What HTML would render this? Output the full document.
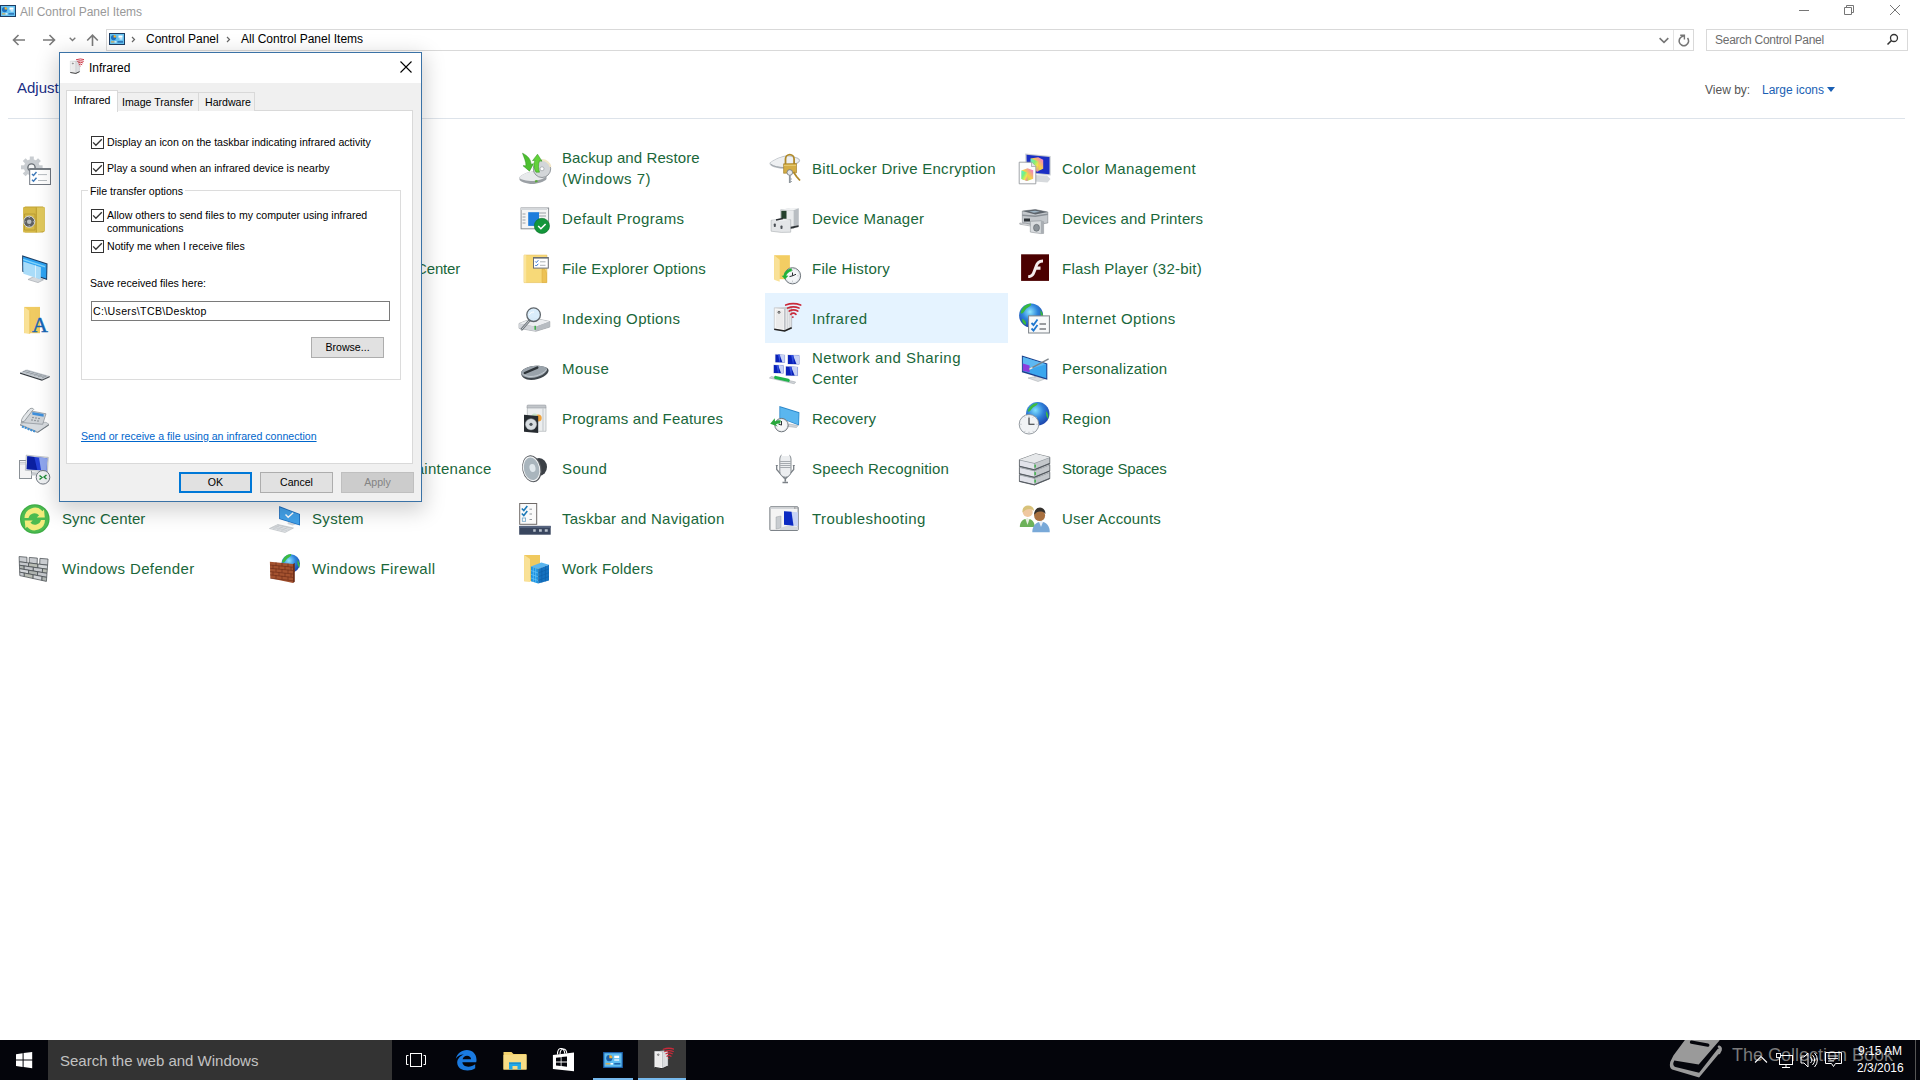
<!DOCTYPE html>
<html><head><meta charset="utf-8">
<style>
*{margin:0;padding:0;box-sizing:border-box}
html,body{width:1920px;height:1080px;overflow:hidden;background:#fff;font-family:"Liberation Sans",sans-serif;position:relative}
.a{position:absolute}
.t{position:absolute;white-space:nowrap;line-height:1}
.it{position:absolute;white-space:nowrap;line-height:20.4px;font-size:15px;color:#1a673a}
.ic{position:absolute;width:32px;height:32px;overflow:visible}
.dt{position:absolute;white-space:nowrap;line-height:1;font-size:10.6px;color:#000}
.cb{position:absolute;width:13px;height:13px;border:1px solid #333;background:#fff}
.cb svg{position:absolute;left:0;top:0}
.btn{position:absolute;height:21px;background:#e1e1e1;border:1px solid #adadad;font-size:10.6px;text-align:center;line-height:19px;color:#000}
</style></head><body>

<!-- title bar -->
<svg class="a" style="left:0px;top:5px" width="16" height="12" viewBox="0 0 16 12"><rect x="0.5" y="0.5" width="15" height="11" fill="#66c3f2" stroke="#1e3d63"/><circle cx="4.6" cy="4.6" r="2.6" fill="#1d6fc0"/><path d="M4.6 2a2.6 2.6 0 0 1 2.6 2.6H4.6z" fill="#f7b52c"/><rect x="9.5" y="2.5" width="4" height="2.2" fill="#fff"/><rect x="10.5" y="5.3" width="3" height="1.2" fill="#e8f6ff"/><rect x="2" y="8.3" width="3.5" height="1.2" fill="#d9b35c"/><rect x="5.5" y="8.3" width="2" height="1.2" fill="#fff"/><rect x="8.5" y="8.3" width="5.5" height="1.2" fill="#1d5fa8"/></svg>
<div class="t" style="left:20px;top:5.8px;font-size:12px;color:#999">All Control Panel Items</div>

<!-- window controls -->
<div class="a" style="left:1799px;top:10px;width:10px;height:1px;background:#767676"></div>
<svg class="a" style="left:1843px;top:4px" width="14" height="14"><path d="M1.5 3.5H8.5V10.5H1.5Z M3.5 3.5V1.5H10.5V8.5H8.5" fill="none" stroke="#767676" stroke-width="1"/></svg>
<svg class="a" style="left:1889px;top:4px" width="12" height="12"><path d="M1 1L11 11M11 1L1 11" stroke="#767676" stroke-width="1"/></svg>

<!-- nav arrows -->
<svg class="a" style="left:12px;top:34px" width="14" height="12"><path d="M1.5 6h11.5M6.5 1L1.5 6l5 5" fill="none" stroke="#7a7a7a" stroke-width="1.6"/></svg>
<svg class="a" style="left:42px;top:34px" width="14" height="12"><path d="M1 6h11.5M7.5 1l5 5-5 5" fill="none" stroke="#7a7a7a" stroke-width="1.6"/></svg>
<svg class="a" style="left:69px;top:37px" width="7" height="5"><path d="M0.7 0.7l2.8 2.8 2.8-2.8" fill="none" stroke="#7a7a7a" stroke-width="1.3"/></svg>
<svg class="a" style="left:86px;top:34px" width="13" height="12"><path d="M6.5 12V1.5M1.2 6.5l5.3-5.3 5.3 5.3" fill="none" stroke="#7a7a7a" stroke-width="1.6"/></svg>

<!-- address bar -->
<div class="a" style="left:106px;top:29px;width:1588px;height:22px;border:1px solid #d9d9d9"></div>
<div class="a" style="left:1673px;top:30px;width:1px;height:20px;background:#e3e3e3"></div>
<svg class="a" style="left:109px;top:33px" width="16" height="12" viewBox="0 0 16 12"><rect x="0.5" y="0.5" width="15" height="11" fill="#66c3f2" stroke="#1e3d63"/><circle cx="4.6" cy="4.6" r="2.6" fill="#1d6fc0"/><path d="M4.6 2a2.6 2.6 0 0 1 2.6 2.6H4.6z" fill="#f7b52c"/><rect x="9.5" y="2.5" width="4" height="2.2" fill="#fff"/><rect x="10.5" y="5.3" width="3" height="1.2" fill="#e8f6ff"/><rect x="2" y="8.3" width="3.5" height="1.2" fill="#d9b35c"/><rect x="5.5" y="8.3" width="2" height="1.2" fill="#fff"/><rect x="8.5" y="8.3" width="5.5" height="1.2" fill="#1d5fa8"/></svg>
<svg class="a" style="left:131px;top:36px" width="5" height="7"><path d="M1 1l2.5 2.5L1 6" fill="none" stroke="#666" stroke-width="1.2"/></svg>
<div class="t" style="left:146px;top:32.7px;font-size:12px;color:#000">Control Panel</div>
<svg class="a" style="left:226px;top:36px" width="5" height="7"><path d="M1 1l2.5 2.5L1 6" fill="none" stroke="#666" stroke-width="1.2"/></svg>
<div class="t" style="left:241px;top:32.7px;font-size:12px;color:#000">All Control Panel Items</div>
<svg class="a" style="left:1658px;top:35px" width="12" height="10"><path d="M1.6 3.2L6 7.4l4.3-4.3" fill="none" stroke="#767676" stroke-width="1.6"/></svg>
<svg class="a" style="left:1677px;top:33px" width="14" height="14"><path d="M6.85 3.3A4.7 4.7 0 1 0 10.5 5.04" fill="none" stroke="#767676" stroke-width="1.5"/><path d="M3.2 2.3H7.4V6.5" fill="none" stroke="#767676" stroke-width="1.4"/></svg>

<!-- search -->
<div class="a" style="left:1706px;top:29px;width:202px;height:22px;border:1px solid #d9d9d9"></div>
<div class="t" style="left:1715px;top:34.3px;font-size:12px;color:#6d6d6d;letter-spacing:-0.26px">Search Control Panel</div>
<svg class="a" style="left:1886px;top:33px" width="13" height="13"><circle cx="8" cy="5" r="3.5" fill="none" stroke="#333" stroke-width="1.3"/><path d="M5.5 7.5L1.5 11.5" stroke="#333" stroke-width="1.6"/></svg>

<!-- header -->
<div class="t" style="left:17px;top:80.3px;font-size:15px;color:#1a2e85">Adjust your computer's settings</div>
<div class="t" style="left:1705px;top:84.3px;font-size:12px;color:#555">View by:</div>
<div class="t" style="left:1762px;top:84.3px;font-size:12px;color:#1a5fb4">Large icons</div>
<svg class="a" style="left:1827px;top:87px" width="9" height="6"><path d="M0 0h8l-4 5z" fill="#1a5fb4"/></svg>
<div class="a" style="left:8px;top:118px;width:1897px;height:1px;background:#dde3ea"></div>

<!-- highlight -->
<div class="a" style="left:765px;top:293px;width:243px;height:50px;background:#e5f3ff"></div>

<div class="it" style="left:62px;top:158.60px;letter-spacing:0.000px">Administrative Tools</div>
<svg class="ic" style="left:18px;top:152px" viewBox="0 0 32 32">
<g transform="translate(13.8 15.3)" fill="#c9cdd1">
<circle r="8"/>
<g id="t"><rect x="-2" y="-10.8" width="4" height="4"/></g>
<rect x="-2" y="-10.8" width="4" height="4" transform="rotate(45)"/>
<rect x="-2" y="-10.8" width="4" height="4" transform="rotate(90)"/>
<rect x="-2" y="-10.8" width="4" height="4" transform="rotate(135)"/>
<rect x="-2" y="-10.8" width="4" height="4" transform="rotate(180)"/>
<rect x="-2" y="-10.8" width="4" height="4" transform="rotate(225)"/>
<rect x="-2" y="-10.8" width="4" height="4" transform="rotate(270)"/>
<rect x="-2" y="-10.8" width="4" height="4" transform="rotate(315)"/>
</g>
<circle cx="13.5" cy="15.5" r="3.6" fill="#f4f5f6" stroke="#6a7076" stroke-width="1.4"/>
<rect x="11.7" y="16.7" width="20.8" height="15.8" fill="#fff" stroke="#707780" stroke-width="1"/>
<rect x="11.5" y="16.3" width="21.2" height="1.6" fill="#6e757c"/>
<path d="M14 22l1.5 1.5 3-3.5M14 27.8l1.5 1.5 3-3.5" stroke="#3d78b8" stroke-width="1.4" fill="none"/>
<path d="M20 22.6h9M20 28.5h9" stroke="#9aa0a6" stroke-width="0.7"/>
</svg>
<div class="it" style="left:312px;top:158.60px;letter-spacing:0.000px">AutoPlay</div>
<div class="it" style="left:562px;top:148.40px;letter-spacing:0.100px">Backup and Restore</div>
<div class="it" style="left:562px;top:168.80px;letter-spacing:0.520px">(Windows 7)</div>
<svg class="ic" style="left:518px;top:152px" viewBox="0 0 32 32">
<path d="M1.5 25.5c0-2 9-6 13.5-6s13 2 13.5 4.5v3c-1 2.5-10 5-14 5-6 0-13-2.5-13-4.5z" fill="#9ba0a5"/>
<path d="M1.5 25.5c0-2 9-6 13.5-6s13 2 13.5 4.5c-1 2.5-10 5-13.5 5-6 0-13.5-1.5-13.5-3.5z" fill="#e8eaec"/>
<path d="M17 29.5l2.5-0.5" stroke="#5aa83c" stroke-width="1.8"/>
<circle cx="24" cy="16.8" r="8.7" fill="#d3d6d9" stroke="#6f757b" stroke-width="0.7"/>
<path d="M24 8.1a8.7 8.7 0 0 1 8.5 7" stroke="#f2e7c8" stroke-width="2" fill="none"/>
<circle cx="24" cy="16.8" r="2" fill="#fff" stroke="#8e9398" stroke-width="0.6"/>
<path d="M4.5 1.2c5 2.5 8.5 6 8.5 11l2.5-0.5-4 7.5-6.5-5.5 3 0c0-4.5-2-8-3.5-12.5z" fill="#4cc02f" stroke="#2d8c1c" stroke-width="0.5"/>
<path d="M18 20.2c-2.5-4-2.5-9-1-12l-2.5 0.5 5-6.5 4.5 7-2.5-0.3c-1.5 3.5-1 8 0 11.3z" fill="#62d23a" stroke="#2d8c1c" stroke-width="0.5"/>
</svg>
<div class="it" style="left:812px;top:158.60px;letter-spacing:0.272px">BitLocker Drive Encryption</div>
<svg class="ic" style="left:768px;top:152px" viewBox="0 0 32 32">
<path d="M1.5 11.5c0-2 12-8 17-8 6 0 13.7 2 13.7 5 0 3-11 8.3-16.7 8.3-6.5 0-14-2.5-14-5.3z" fill="#bfc4c9"/>
<path d="M2.5 11.2c1-2 11-6.7 16-6.7 5 0 12 1.7 12.5 4-1 2.5-11 6.5-15.5 6.5-5.5 0-12-1.5-13-3.8z" fill="#eef0f2"/>
<path d="M3 12.5c3 2 8 3 12.5 3" stroke="#9ea4aa" stroke-width="1" fill="none"/>
<path d="M17.5 12V7a4.3 4.3 0 0 1 8.6 0v5" fill="none" stroke="#b08a2a" stroke-width="1.8"/>
<path d="M15.6 11.8l12.9-0.3v9.3l-12.9 0.5z" fill="#d4ad45" stroke="#9a7520" stroke-width="0.6"/>
<path d="M16 13.5h12" stroke="#e8cf7a" stroke-width="0.8"/>
<circle cx="21.8" cy="20.5" r="2.8" fill="#e4e7ea" stroke="#6d747a" stroke-width="0.8"/>
<path d="M21.8 23v8" stroke="#8f969c" stroke-width="1.8"/>
<path d="M22.5 27h1.3M22.5 29.5h1.3" stroke="#8f969c" stroke-width="1"/>
<path d="M25.5 20l3 4.5 3.5 4" stroke="#b08a2a" stroke-width="1.8" fill="none"/>
</svg>
<div class="it" style="left:1062px;top:158.60px;letter-spacing:0.400px">Color Management</div>
<svg class="ic" style="left:1018px;top:152px" viewBox="0 0 32 32">
<defs><linearGradient id="cg1" x1="0" y1="0" x2="1" y2="1"><stop offset="0" stop-color="#4ff0e0"/><stop offset="0.4" stop-color="#7cf07a"/><stop offset="0.7" stop-color="#f6e44a"/><stop offset="1" stop-color="#f25ac8"/></linearGradient>
<linearGradient id="cg2" x1="1" y1="0" x2="0" y2="1"><stop offset="0" stop-color="#f06de0"/><stop offset="0.5" stop-color="#f6d345"/><stop offset="1" stop-color="#62e08a"/></linearGradient></defs>
<path d="M15 23l14 0.5 3.5 3.5-3 3.5-13-1z" fill="#d7dadd"/>
<path d="M7.2 1.4l25.5 2.5v19.6l-25-2.5z" fill="#c9cdd1"/>
<path d="M8.5 2.8l23 2.2v17.2l-22.5-2z" fill="#1b2fc4"/>
<path d="M12.7 6.5l7.5-1.3 5 2.5v9l-5 2.3-7.5-3z" fill="url(#cg2)"/>
<path d="M12.7 6.5l7.5 3v10.5l-7.5-3z" fill="url(#cg1)" opacity="0.9"/>
<path d="M1.2 10.2h12.3l4.3 4.3v17.3H1.2z" fill="#fdfdfd" stroke="#8b9196" stroke-width="0.8"/>
<path d="M13.5 10.2v4.3h4.3" fill="#e4e6e8" stroke="#8b9196" stroke-width="0.6"/>
<path d="M3.5 18.5l6-2.2 5.7 2v8.5l-6 2.2-5.7-2z" fill="url(#cg2)"/>
<path d="M3.5 18.5l5.7 2v8.5l-5.7-2z" fill="url(#cg1)"/>
</svg>
<div class="it" style="left:62px;top:208.60px;letter-spacing:0.000px">Credential Manager</div>
<svg class="ic" style="left:18px;top:202px" viewBox="0 0 32 32">
<path d="M5.3 5.5l2-1h17.5l1.9 1.2v23.5l-1.9 1.2H7.3l-2-1z" fill="#c2a332"/>
<path d="M5.3 5.5h13v24.9h-13z" fill="#d6b946"/>
<path d="M18.3 5.5l8.4-0.3v23.9l-8.4 1.3z" fill="#e0c85c"/>
<path d="M18.3 5.5v24.9" stroke="#b59628" stroke-width="0.8"/>
<path d="M6.5 12h10.5v16h-10.5z" fill="none" stroke="#b39530" stroke-width="0.8"/>
<circle cx="11.2" cy="19.7" r="5.6" fill="#5d6062" stroke="#d8dadc" stroke-width="1"/>
<circle cx="11.2" cy="19.7" r="2.3" fill="#b9bdc0"/>
<g fill="#e8e8e8"><circle cx="11.2" cy="15.6" r="0.5"/><circle cx="11.2" cy="23.8" r="0.5"/><circle cx="7.1" cy="19.7" r="0.5"/><circle cx="15.3" cy="19.7" r="0.5"/></g>
</svg>
<div class="it" style="left:312px;top:208.60px;letter-spacing:0.000px">Date and Time</div>
<div class="it" style="left:562px;top:208.60px;letter-spacing:0.360px">Default Programs</div>
<svg class="ic" style="left:518px;top:202px" viewBox="0 0 32 32">
<rect x="3.1" y="6" width="27.5" height="20.8" fill="#f4f4f4" stroke="#8b9095"/>
<rect x="3" y="6" width="26" height="2" fill="#d5d8db"/>
<rect x="10.2" y="10.2" width="10.8" height="13.7" fill="#1f7ddb"/>
<path d="M4.5 12h3M4.5 15h3M4.5 18h3M4.5 21h3M21 11h7M21 14h7" stroke="#9aa0a6"/>
<circle cx="23.9" cy="23.9" r="7.6" fill="#13963a" stroke="#0b6e29" stroke-width="0.6"/>
<path d="M20.2 24l2.7 2.7 4.7-4.7" stroke="#fff" stroke-width="1.6" fill="none"/>
</svg>
<div class="it" style="left:812px;top:208.60px;letter-spacing:0.208px">Device Manager</div>
<svg class="ic" style="left:768px;top:202px" viewBox="0 0 32 32">
<path d="M12.7 7.7l10-1.7 7.9 0.2v17.3l-7.9 2-10-1z" fill="#c9cdd1"/>
<path d="M12.7 7.7l13.3 0.3v18.5l-13.3-1.5z" fill="#e9ebed" stroke="#a7acb1" stroke-width="0.5"/>
<path d="M26 8l4.6-1.8v17.3l-4.6 2z" fill="#b9bec3"/>
<path d="M12.7 7.7l10-1.7 7.9 0.2-4.6 1.8z" fill="#f4f5f6"/>
<rect x="13.3" y="8.8" width="5.2" height="8" fill="#24402c"/>
<path d="M3.1 18.3l9.6-1.3 10 0.7v12.5l-9.5 0.2-10.1-1.2z" fill="#e4e6e8" stroke="#9da2a7" stroke-width="0.5"/>
<path d="M3.1 18.3l9.6-1.3 10 0.7-9.6 1z" fill="#f6f7f8"/>
<path d="M8 18l7-1.5" stroke="#2b2f33" stroke-width="1.3"/>
<rect x="5.8" y="21.5" width="2" height="3.5" rx="0.8" fill="#4a4f54"/>
<rect x="12.5" y="23.5" width="2" height="3.5" rx="0.8" fill="#4a4f54"/>
<path d="M22.7 24.8l7.9-1.5v1.8l-7.9 1.6z" fill="#2d3236"/>
</svg>
<div class="it" style="left:1062px;top:208.60px;letter-spacing:0.137px">Devices and Printers</div>
<svg class="ic" style="left:1018px;top:202px" viewBox="0 0 32 32">
<path d="M4.3 9l13-1.5 12.5 2.5v11l-12.8 2-12.7-2.5z" fill="#c4c8cc" stroke="#6e757b" stroke-width="0.5"/>
<path d="M4.3 9l13-1.5 12.5 2.5-12.5 2.5z" fill="#5e656c"/>
<path d="M11 9.5l6-0.8 5 1-6 1z" fill="#9fb6c6"/>
<path d="M4.3 12.5l13 1 12.5-2v1.5l-12.5 2-13-1z" fill="#8a9096"/>
<path d="M1.8 21l10.9 1.5v1.5l-10.9-1.8z" fill="#fafafa" stroke="#6e757b" stroke-width="0.5"/>
<path d="M6 16.5h6v3H6z" fill="#2f3438"/>
<path d="M12.3 19.3l10.5-0.5 2.8 1v11.6l-2.8 0.2-10.5-1.5z" fill="#d9dcdf" stroke="#7b8187" stroke-width="0.5"/>
<path d="M22.8 18.8l2.8 1v11.6l-2.8 0.2z" fill="#a9aeb3"/>
<ellipse cx="18.5" cy="25.8" rx="3" ry="3.5" fill="#8b9298" stroke="#4f555a" stroke-width="0.5"/>
</svg>
<div class="it" style="left:62px;top:258.60px;letter-spacing:0.000px">Display</div>
<svg class="ic" style="left:18px;top:252px" viewBox="0 0 32 32">
<path d="M10 27.5l6-3 9.5 3.3-5.5 2.8z" fill="#d5d9dd" stroke="#9aa0a6" stroke-width="0.6"/>
<path d="M4.1 3.2l25.4 8.4-0.4 16.3-24.8-8.2z" fill="#1d3f66"/>
<path d="M5.1 4.7l23.4 7.6-0.3 14.3-22.9-7.5z" fill="#2ea3f2"/>
<path d="M5.1 6.8l22 7.2v1.5l-22-7.2z" fill="#7fd3fb"/>
<path d="M5.3 9.5l17.6 5.8-0.1 12.2-17.4-5.7z" fill="#a9dcf9"/>
<path d="M17.5 13.5v12.3" stroke="#e6f6ff" stroke-width="0.8"/>
</svg>
<div class="it" style="left:312px;top:258.60px;letter-spacing:-0.175px">Ease of Access Center</div>
<div class="it" style="left:562px;top:258.60px;letter-spacing:0.185px">File Explorer Options</div>
<svg class="ic" style="left:518px;top:252px" viewBox="0 0 32 32">
<path d="M6 3.1h22.9v27.5H6z" fill="#f7d978" stroke="#e4bd55" stroke-width="0.6"/>
<path d="M6 3.1h2.2v27.5H6z" fill="#fbe59c"/>
<path d="M24 17l2.5 0 2 4v9.5h-4.5z" fill="#edc255" stroke="#d9a93c" stroke-width="0.5"/>
<rect x="15.5" y="5.5" width="14.8" height="10.6" fill="#fff" stroke="#6b6f75" stroke-width="1"/>
<rect x="15.5" y="5.3" width="14.8" height="1.3" fill="#6b6f75"/>
<path d="M17.3 9.5l1 1 2-2.2M17.3 13l1 1 2-2.2" stroke="#2a6fcf" stroke-width="1" fill="none"/>
<path d="M22 9.8h5.5M22 13.3h5.5" stroke="#8a9096" stroke-width="0.7"/>
</svg>
<div class="it" style="left:812px;top:258.60px;letter-spacing:0.255px">File History</div>
<svg class="ic" style="left:768px;top:252px" viewBox="0 0 32 32">
<path d="M6.2 3.2h15.7v24h-15.7z" fill="#f3cd63"/>
<path d="M6.2 3.2l5.5 4.5v22l-5.5-2z" fill="#f9e197"/>
<circle cx="24.5" cy="23.8" r="8.1" fill="#e4e8ec" stroke="#6f767c" stroke-width="1"/>
<circle cx="24.5" cy="23.8" r="6.3" fill="#f4f6f8"/>
<g stroke="#9aa0a6" stroke-width="0.6"><path d="M24.5 17.8v1.2M24.5 28.6v1.2M18.5 23.8h1.2M29.3 23.8h1.2"/></g>
<path d="M24.5 20.5v3.3l-3 0.8M24.5 23.8l3.5-1.5" stroke="#2a2f33" stroke-width="1" fill="none"/>
<path d="M15.4 23.8c1-4 4-7 8.4-7.4v2.8c-3 0.4-5 2.5-5.6 4.6l2.2 0-3.4 3.4-3.4-3.4z" fill="#22b33a"/>
</svg>
<div class="it" style="left:1062px;top:258.60px;letter-spacing:0.235px">Flash Player (32-bit)</div>
<svg class="ic" style="left:1018px;top:252px" viewBox="0 0 32 32">
<rect x="3.1" y="2.3" width="27.9" height="26.6" fill="#4b0000"/>
<path d="M25 7.5c-5 0-7.2 3.3-8.2 6.3l-2 5.3c-1 3-2.2 4.2-4.6 4.2v2.8c4.2 0 6.3-2.8 7.3-5.8l1-2.6h4v-3.2h-3c1-2.5 2.5-3.9 5.5-3.9z" fill="#f4eaea"/>
</svg>
<div class="it" style="left:62px;top:308.60px;letter-spacing:0.000px">Fonts</div>
<svg class="ic" style="left:18px;top:302px" viewBox="0 0 32 32">
<path d="M6.2 4.9h15.8v26.3H6.2z" fill="#f0cb62"/>
<path d="M6.2 4.9l5.5 4v23l-5.5-1.2z" fill="#f9e196"/>
<path d="M11.7 8.9v23" stroke="#e6bd55" stroke-width="0.6"/>
<text x="22" y="29.8" font-family="Liberation Serif" font-size="22" text-anchor="middle" fill="#1565b5" stroke="#1565b5" stroke-width="0.5">A</text>
</svg>
<div class="it" style="left:312px;top:308.60px;letter-spacing:0.000px">HomeGroup</div>
<div class="it" style="left:562px;top:308.60px;letter-spacing:0.360px">Indexing Options</div>
<svg class="ic" style="left:518px;top:302px" viewBox="0 0 32 32">
<path d="M1 21.5l14-5.5 16.8 3.5v5.5l-14 4.3-16.8-3z" fill="#a4a9ae" stroke="#7a8085" stroke-width="0.5"/>
<path d="M1 21.5l14-5.5 16.8 3.5-14 5.3z" fill="#eceef0"/>
<path d="M1 21.5l16.8 3.3v4.5l-16.8-3z" fill="#d2d5da"/>
<path d="M17.8 24.8l14-5.3v5.5l-14 4.3z" fill="#b7bcc1"/>
<rect x="16.4" y="23.8" width="1.6" height="4" fill="#3fb04a"/>
<path d="M11.5 18.5L3.9 27.2" stroke="#6f767c" stroke-width="2.6" stroke-linecap="round"/>
<path d="M11.5 18.5L3.9 27.2" stroke="#d9dde1" stroke-width="0.8" stroke-linecap="round"/>
<circle cx="15.6" cy="12.7" r="6.8" fill="#d6ebfb" fill-opacity="0.9" stroke="#5f666c" stroke-width="1.3"/>
<path d="M11 13c1-2 3-3 5-3" stroke="#fff" stroke-width="1" fill="none"/>
</svg>
<div class="it" style="left:812px;top:308.60px;letter-spacing:0.486px">Infrared</div>
<svg class="ic" style="left:768px;top:302px" viewBox="0 0 32 32">
<path d="M6.3 5.8l12.4-0.8 5 1.2v19.5l-7 3.3-10.4-1.8z" fill="#f4f4f4"/>
<path d="M6.3 5.8l10.4 0.9v22.3l-10.4-1.8z" fill="#f6f6f6" stroke="#b5b9bd" stroke-width="0.6"/>
<path d="M8 8l7.5 0.6v18.4l-7.5-1.3z" fill="#ebebeb"/>
<path d="M16.7 6.7l7-0.5v19.5l-7 3.3z" fill="#d4d7da" stroke="#9ea3a8" stroke-width="0.5"/>
<path d="M18.5 7v20M20.5 6.8v19.5M22.3 6.6v18.8" stroke="#f2f2f2" stroke-width="0.6"/>
<path d="M6.3 5.8l12.4-0.8 5 1.2-7 0.5z" fill="#c6c9cc"/>
<circle cx="11" cy="10.3" r="1" fill="none" stroke="#333" stroke-width="0.8"/>
<path d="M6.2 27.3l10.5 1.7 7-3.3" stroke="#222" stroke-width="1.6" fill="none"/>
<g fill="none" stroke="#c92a3a" stroke-width="1.7" stroke-linecap="round">
<path d="M17.7 3A22.3 22.3 0 0 1 32.7 3"/>
<path d="M19.7 6A16.5 16.5 0 0 1 31 6"/>
<path d="M21.3 9A9.3 9.3 0 0 1 29.7 9"/>
<path d="M22.7 12.3A4 4 0 0 1 28 12.3"/>
</g>
<path d="M24 15l1.6 0.3" stroke="#c92a3a" stroke-width="1.5"/>
</svg>
<div class="it" style="left:1062px;top:308.60px;letter-spacing:0.433px">Internet Options</div>
<svg class="ic" style="left:1018px;top:302px" viewBox="0 0 32 32">
<defs><radialGradient id="ig" cx="0.45" cy="0.35" r="0.7"><stop offset="0" stop-color="#8fe8ff"/><stop offset="0.45" stop-color="#2f86dc"/><stop offset="1" stop-color="#1a3aa0"/></radialGradient></defs>
<circle cx="13.1" cy="13.5" r="12" fill="url(#ig)"/>
<path d="M2.5 11c1.5-6 6-9.5 10.5-9.5 1 2.5-3 3.5-5 5.5s-3 6-5.5 4z" fill="#39b83c"/>
<path d="M22.5 8c2.5 3 3 6 2.5 9-2-2-3-5-2.5-9z" fill="#39b83c"/>
<path d="M4 17c2 0 4.5 2.5 4 6-2.5-0.5-4-3-4-6z" fill="#39b83c"/>
<rect x="10.6" y="13.9" width="20.8" height="17.1" fill="#f8f9fa" stroke="#7d8389" stroke-width="1"/>
<path d="M11 14.5h20" stroke="#c5c9cd" stroke-width="1"/>
<path d="M13.5 21l2 2 4-5.5M13.5 26.5l2 2 4-5.5" stroke="#1f77cf" stroke-width="1.8" fill="none"/>
<path d="M21.5 22h6.5M21.5 27h6.5" stroke="#3a3f44" stroke-width="1"/>
</svg>
<div class="it" style="left:62px;top:358.60px;letter-spacing:0.000px">Keyboard</div>
<svg class="ic" style="left:18px;top:352px" viewBox="0 0 32 32">
<path d="M2 20.5l7-3 22.7 6.5-7.7 3.5z" fill="#c5cbd1"/>
<path d="M2 20.5l22 7v1.3L2 21.8z" fill="#33393f"/>
<path d="M24 27.5l7.7-3.5v1.2L24 28.8z" fill="#4a5056"/>
<g stroke="#7f878f" stroke-width="0.5"><path d="M5 19.2l21 6M7.5 18.2l21 6"/><path d="M8 18.4l-3.5 1.6M12 19.5l-3.8 1.7M16 20.6l-3.8 1.8M20 21.8l-4 1.8M24 22.9l-4 1.9M28 24l-4 1.9"/></g>
</svg>
<div class="it" style="left:312px;top:358.60px;letter-spacing:0.000px">Language</div>
<div class="it" style="left:562px;top:358.60px;letter-spacing:0.425px">Mouse</div>
<svg class="ic" style="left:518px;top:352px" viewBox="0 0 32 32">
<path d="M3.1 21c0-3 7-7.2 15-7.2 6 0 12.5 1.5 12.5 4.7 0 4-8 9.5-17.5 9.5-6 0-10-3-10-7z" fill="#3f464c"/>
<path d="M3.1 21c0-3 7-7.2 15-7.2 6 0 11 1 11 3.5 0 3.5-7.5 8.7-16 8.7-6 0-10-2.5-10-5z" fill="#9aa3ab"/>
<path d="M5 21.5c1 2 4 3 8 3 7 0 14-4 15.5-7" stroke="#c9d0d6" stroke-width="0.9" fill="none"/>
<path d="M6.8 21l12.5-5.4" stroke="#2e3439" stroke-width="2.4" stroke-linecap="round"/>
</svg>
<div class="it" style="left:812px;top:348.40px;letter-spacing:0.467px">Network and Sharing</div>
<div class="it" style="left:812px;top:368.80px;letter-spacing:0.200px">Center</div>
<svg class="ic" style="left:768px;top:352px" viewBox="0 0 32 32">
<path d="M6.8 1.8l10.5 0.5v8.7l-10.5 -0.3z" fill="#e8eaec"/>
<path d="M7.3999999999999995 2.4l9.3 0.5v7.6l-9.3 -0.3z" fill="#0a22b8"/>
<path d="M11.525 2.6l5.25 0.4v7.3999999999999995l-2.31 0z" fill="#c9d3f5"/>
<path d="M9.95 2.6l2.1 0v7.3999999999999995l-0.525 0z" fill="#3552e0"/><path d="M19.3 2.3l12.5 0.5v9.899999999999999l-12.5 -0.3z" fill="#e8eaec"/>
<path d="M19.900000000000002 2.9l11.3 0.5v8.799999999999999l-11.3 -0.3z" fill="#0a22b8"/>
<path d="M24.925 3.0999999999999996l6.25 0.4v8.599999999999998l-2.75 0z" fill="#c9d3f5"/>
<path d="M23.05 3.0999999999999996l2.5 0v8.599999999999998l-0.625 0z" fill="#3552e0"/><path d="M5.2 12.3l10.8 0.5v9.0l-10.8 -0.3z" fill="#e8eaec"/>
<path d="M5.8 12.9l9.600000000000001 0.5v7.9l-9.600000000000001 -0.3z" fill="#0a22b8"/>
<path d="M10.06 13.100000000000001l5.4 0.4v7.7l-2.3760000000000003 0z" fill="#c9d3f5"/>
<path d="M8.440000000000001 13.100000000000001l2.16 0v7.7l-0.54 0z" fill="#3552e0"/><path d="M17.3 13.9l12.899999999999999 0.5v9.9l-12.899999999999999 -0.3z" fill="#e8eaec"/>
<path d="M17.900000000000002 14.5l11.7 0.5v8.8l-11.7 -0.3z" fill="#0a22b8"/>
<path d="M23.105 14.700000000000001l6.449999999999999 0.4v8.6l-2.8379999999999996 0z" fill="#c9d3f5"/>
<path d="M21.17 14.700000000000001l2.58 0v8.6l-0.645 0z" fill="#3552e0"/>
<path d="M1.4 26l2-1.5 24.3 5.5-1.5 1.8z" fill="#cfd3d7" stroke="#9aa0a6" stroke-width="0.5"/>
<path d="M7.7 25.5l12.5 2.8" stroke="#1fb34a" stroke-width="3.2" stroke-linecap="round"/>
</svg>
<div class="it" style="left:1062px;top:358.60px;letter-spacing:0.179px">Personalization</div>
<svg class="ic" style="left:1018px;top:352px" viewBox="0 0 32 32">
<path d="M10 26l8-1.5 10 2-8 3z" fill="#d9dcdf" stroke="#a3a8ad" stroke-width="0.5"/>
<path d="M17 22v3.5" stroke="#b9bec3" stroke-width="1.5"/>
<path d="M3.9 3.5l25.4 7.9v16.3L3.9 20.2z" fill="#1d3f8a"/>
<path d="M4.9 5l23.4 7.2v14.1L4.9 19z" fill="#3aa6ee"/>
<path d="M4.9 5l23.4 7.2-23.4 7z" fill="#5db8f2"/>
<path d="M4.9 11.5l6.7 2.1v6.6l-6.7-1.4z" fill="#8d3cdc"/>
<path d="M11.4 17.2l18.8-10" stroke="#7b8288" stroke-width="1.4" stroke-linecap="round"/>
<path d="M11.4 17.2l3-1.6" stroke="#f0f0f0" stroke-width="1.2"/>
</svg>
<div class="it" style="left:62px;top:408.60px;letter-spacing:0.000px">Phone and Modem</div>
<svg class="ic" style="left:18px;top:402px" viewBox="0 0 32 32">
<path d="M2 22.3l4-2h22l3 2-11 7.8z" fill="#d7dbdf" stroke="#8a9097" stroke-width="0.5"/>
<path d="M2 22.3l17.5 7.8v1L2 23.5z" fill="#8f969c"/>
<path d="M19.5 30.1l11.3-7.8v1.2l-11.3 7.6z" fill="#6f767c"/>
<path d="M4 24.5l13 5" stroke="#3d8fd6" stroke-width="2.2" stroke-dasharray="2 1"/>
<path d="M3 20.5l7-12.2 18 3.5-3.3 10.5z" fill="#cfd3d7" stroke="#7a8188" stroke-width="0.6"/>
<path d="M14.3 10l11.3 2v2.7l-11.3-2z" fill="#3f8fdb"/>
<g fill="#7d848a"><circle cx="15" cy="15.5" r="0.8"/><circle cx="18" cy="16" r="0.8"/><circle cx="21" cy="16.5" r="0.8"/><circle cx="14" cy="18" r="0.8"/><circle cx="17" cy="18.5" r="0.8"/><circle cx="20" cy="19" r="0.8"/></g>
<path d="M3.8 19.8c-1-1 0-3 2-6l6-7c1.5-1 3.5-0.5 4 0.5l-1.5 1.5-8 10.5z" fill="#e3e6e9" stroke="#6c7379" stroke-width="0.6"/>
</svg>
<div class="it" style="left:312px;top:408.60px;letter-spacing:0.000px">Power Options</div>
<div class="it" style="left:562px;top:408.60px;letter-spacing:0.170px">Programs and Features</div>
<svg class="ic" style="left:518px;top:402px" viewBox="0 0 32 32">
<path d="M9.3 5.5h18.7v23.8h-18.7z" fill="#eceeef" stroke="#a3a8ad" stroke-width="0.6"/>
<path d="M9 3.5l1-0.5h17l1 0.5v2.5h-19z" fill="#c2c6ca" stroke="#8e9398" stroke-width="0.5"/>
<path d="M25 6v23" stroke="#c9cdd1" stroke-width="1.2"/>
<circle cx="20.2" cy="16" r="3.5" fill="#f0a33c"/>
<circle cx="16.5" cy="14.5" r="3" fill="#bfe0c0" opacity="0.8"/>
<path d="M6 12.7l14.2 1.2v17.1l-14.2-1.2z" fill="#262b30"/>
<circle cx="13" cy="22.3" r="5.6" fill="#d8dde1" stroke="#9aa0a6" stroke-width="0.5"/>
<circle cx="13" cy="22.3" r="1.6" fill="#4e555b"/>
</svg>
<div class="it" style="left:812px;top:408.60px;letter-spacing:0.086px">Recovery</div>
<svg class="ic" style="left:768px;top:402px" viewBox="0 0 32 32">
<path d="M11.4 3.9l20 6.3-0.4 13.3-19.6-7.5z" fill="#2a86c9"/>
<path d="M12.2 5.2l18.4 5.8-0.3 11.6-18.1-6.9z" fill="#5ab6ef"/>
<path d="M21 22l9 1.5-1.5 2-8.5-1z" fill="#d3d7db" stroke="#9aa0a6" stroke-width="0.5"/>
<circle cx="13.5" cy="23.1" r="6.7" fill="#e8ebee" stroke="#6f767c" stroke-width="1"/>
<circle cx="13.5" cy="23.1" r="5.3" fill="#f6f7f8"/>
<path d="M13.5 19v4.1l-3 -1" stroke="#2d3338" stroke-width="1" fill="none"/>
<path d="M2.2 21.8l4.5-5.5 0.3 3.3c2-1.3 4-1.5 6-1l-1 3c-1.5-0.4-3 0-4.3 0.8l2.2 2z" fill="#28a83c"/>
</svg>
<div class="it" style="left:1062px;top:408.60px;letter-spacing:0.260px">Region</div>
<svg class="ic" style="left:1018px;top:402px" viewBox="0 0 32 32">
<defs><radialGradient id="rg" cx="0.4" cy="0.35" r="0.7"><stop offset="0" stop-color="#7fe0ff"/><stop offset="0.5" stop-color="#2f7fd8"/><stop offset="1" stop-color="#1b3fa8"/></radialGradient></defs>
<circle cx="19.75" cy="11.8" r="11.7" fill="url(#rg)"/>
<path d="M9.5 9c2-5 6-8 10-8 1 2-3 3-5 5s-3 5-5 3z" fill="#3dbb3f"/>
<path d="M28 9c2 2 3 5 2 8-1.5-2-2.5-5-2-8z" fill="#3dbb3f"/>
<circle cx="11" cy="22.25" r="9.8" fill="#f1f3f5" stroke="#8b9298" stroke-width="0.9"/>
<g stroke="#9aa0a6" stroke-width="0.6"><path d="M11 13.5v1.3M11 29.7v1.3M2.3 22.25h1.3M18.4 22.25h1.3M6.6 14.6l0.6 1M15.4 14.6l-0.6 1M6.6 29.9l0.6-1M15.4 29.9l-0.6-1"/></g>
<path d="M11 15.5v6.75h5.5" stroke="#2a2f33" stroke-width="1.1" fill="none"/>
</svg>
<div class="it" style="left:62px;top:448.40px;letter-spacing:0.000px">RemoteApp and Desktop</div>
<div class="it" style="left:62px;top:468.80px;letter-spacing:0.000px">Connections</div>
<svg class="ic" style="left:18px;top:452px" viewBox="0 0 32 32">
<rect x="1.5" y="8.5" width="12" height="18" fill="#f4f4f4" stroke="#8a9096"/>
<path d="M2 10.5h11M2 12h11" stroke="#c3c7cb" stroke-width="0.8"/>
<path d="M8.2 3.1l22.1 2.2-0.8 14.7-22.2-1.7z" fill="#d9dde1" stroke="#9aa0a6" stroke-width="0.5"/>
<path d="M9.3 4.3l20 2-0.7 12.5-19.9-1.5z" fill="#2440d6"/>
<path d="M9.3 4.3l7 0.7 3 12.9-10.6-0.8z" fill="#0b1fa0"/>
<path d="M21 5.5l8.3 0.8-0.7 12.5-5.5-0.4z" fill="#8fa6ee"/>
<path d="M14 20l6 0.5 1 3-8 0z" fill="#c5c9cd"/>
<circle cx="25" cy="25.3" r="6.8" fill="#eef0f2" stroke="#707780" stroke-width="1"/>
<path d="M21.5 27.5l2.5-2-2.5-2M28.5 23l-2.5 2 2.5 2" stroke="#1e8a36" stroke-width="1.4" fill="none"/>
</svg>
<div class="it" style="left:312px;top:458.60px;letter-spacing:0.261px">Security and Maintenance</div>
<div class="it" style="left:562px;top:458.60px;letter-spacing:0.375px">Sound</div>
<svg class="ic" style="left:518px;top:452px" viewBox="0 0 32 32">
<ellipse cx="21" cy="15" rx="8" ry="9" fill="#3b4046"/>
<ellipse cx="13.9" cy="16.8" rx="9.6" ry="13.6" transform="rotate(-12 13.9 16.8)" fill="#55595e"/>
<ellipse cx="13.6" cy="16.8" rx="8.6" ry="12.6" transform="rotate(-12 13.6 16.8)" fill="#f2f4f5"/>
<ellipse cx="13.6" cy="16.8" rx="7.6" ry="11.4" transform="rotate(-12 13.6 16.8)" fill="#a9b5bd"/>
<ellipse cx="14.5" cy="16" rx="3" ry="4" transform="rotate(-12 14.5 16)" fill="#dfe7ec"/>
</svg>
<div class="it" style="left:812px;top:458.60px;letter-spacing:0.147px">Speech Recognition</div>
<svg class="ic" style="left:768px;top:452px" viewBox="0 0 32 32">
<path d="M8.7 13.5v4l7.5 8.5h2l7.5-8.5v-4" fill="none" stroke="#7b8187" stroke-width="1.3"/>
<path d="M7.8 13.5h2M24.8 13.5h2" stroke="#7b8187" stroke-width="1.2"/>
<rect x="11.8" y="1.4" width="11.2" height="23.8" rx="5.6" fill="#eceef0" stroke="#7b8187" stroke-width="0.9"/>
<path d="M13.5 4a4 4 0 0 1 8 0" fill="#fff" stroke="none"/>
<path d="M12.2 9.5h10.4M12.2 11.5h10.4M12.2 13.5h10.4M12.2 15.5h10.4" stroke="#888e94" stroke-width="0.7"/>
<path d="M17.3 26v3.5M14.5 30.5h5.5" stroke="#7b8187" stroke-width="1.6"/>
</svg>
<div class="it" style="left:1062px;top:458.60px;letter-spacing:-0.154px">Storage Spaces</div>
<svg class="ic" style="left:1018px;top:452px" viewBox="0 0 32 32">
<g transform="translate(0 15)">
<path d="M1.4 7.7l16.3-5.9 14.1 3.4v6.5l-15.4 6.3-15-3.5z" fill="#8e959b" stroke="#50565c" stroke-width="0.7"/>
<path d="M1.4 7.7l16.3-5.9 14.1 3.4-15.4 5.9z" fill="#e6e8ea"/>
<path d="M2 8.6l14.4 3.2v5.6l-14.4-3.3z" fill="#e2e3ea"/>
<path d="M17 11.6l14.2-5.5v4.9l-14.2 5.8z" fill="#c3c7cb"/>
<path d="M1.4 14.2l15 3.5 15.4-6.3" stroke="#4f555b" stroke-width="0.9" fill="none"/>
<rect x="16.4" y="12.5" width="1.5" height="3.2" rx="0.6" fill="#3fb34a"/>
</g><g transform="translate(0 7.5)">
<path d="M1.4 7.7l16.3-5.9 14.1 3.4v6.5l-15.4 6.3-15-3.5z" fill="#8e959b" stroke="#50565c" stroke-width="0.7"/>
<path d="M1.4 7.7l16.3-5.9 14.1 3.4-15.4 5.9z" fill="#e6e8ea"/>
<path d="M2 8.6l14.4 3.2v5.6l-14.4-3.3z" fill="#e2e3ea"/>
<path d="M17 11.6l14.2-5.5v4.9l-14.2 5.8z" fill="#c3c7cb"/>
<path d="M1.4 14.2l15 3.5 15.4-6.3" stroke="#4f555b" stroke-width="0.9" fill="none"/>
<rect x="16.4" y="12.5" width="1.5" height="3.2" rx="0.6" fill="#3fb34a"/>
</g><g transform="translate(0 0)">
<path d="M1.4 7.7l16.3-5.9 14.1 3.4v6.5l-15.4 6.3-15-3.5z" fill="#8e959b" stroke="#50565c" stroke-width="0.7"/>
<path d="M1.4 7.7l16.3-5.9 14.1 3.4-15.4 5.9z" fill="#e6e8ea"/>
<path d="M2 8.6l14.4 3.2v5.6l-14.4-3.3z" fill="#e2e3ea"/>
<path d="M17 11.6l14.2-5.5v4.9l-14.2 5.8z" fill="#c3c7cb"/>
<path d="M1.4 14.2l15 3.5 15.4-6.3" stroke="#4f555b" stroke-width="0.9" fill="none"/>
<rect x="16.4" y="12.5" width="1.5" height="3.2" rx="0.6" fill="#3fb34a"/>
</g>
</svg>
<div class="it" style="left:62px;top:508.60px;letter-spacing:0.080px">Sync Center</div>
<svg class="ic" style="left:18px;top:502px" viewBox="0 0 32 32">
<circle cx="16.8" cy="17" r="14.8" fill="#3fae45"/>
<circle cx="16.8" cy="17" r="13.6" fill="#4cbb50"/>
<path d="M6.5 16a10.3 10.3 0 0 1 18-6.8l1.5-1.7 0.8 8h-8l2.3-2.3A6.3 6.3 0 0 0 10.5 16z" fill="#f3ec7c"/>
<path d="M27 18a10.3 10.3 0 0 1-18 6.8l-1.5 1.7-0.8-8h8l-2.3 2.3A6.3 6.3 0 0 0 23 18z" fill="#f3ec7c"/>
</svg>
<div class="it" style="left:312px;top:508.60px;letter-spacing:0.320px">System</div>
<svg class="ic" style="left:268px;top:502px" viewBox="0 0 32 32">
<path d="M1.4 26.5l8.5-4 15.6 3.5-8.5 4.5z" fill="#dfe2e5" stroke="#a9aeb3" stroke-width="0.5"/>
<g stroke="#b3b8bd" stroke-width="0.4"><path d="M4 25.3l15 3.4M6.5 24.1l15 3.4M9 23l14.5 3.3M5 27l6-3M9 28l6-3.2M13 29l6-3.3"/></g>
<path d="M20 20l4 1 4.5-1 1 2-5 1.5-5-1.5z" fill="#d3d7db"/>
<path d="M11.1 4.1l20.9 7.9v11.6l-20.9-6.5z" fill="#1e6fc0"/>
<path d="M12 5.4l19.2 7.2v10l-19.2-6z" fill="#43a2ea"/>
<path d="M17.5 12.5l2.7 2.7 5-4.5" stroke="#fff" stroke-width="1.4" fill="none"/>
</svg>
<div class="it" style="left:562px;top:508.60px;letter-spacing:0.262px">Taskbar and Navigation</div>
<svg class="ic" style="left:518px;top:502px" viewBox="0 0 32 32">
<rect x="1.7" y="1.5" width="17" height="20.8" fill="#fafafa" stroke="#6f6a68" stroke-width="1"/>
<path d="M3.8 6.5l2 2 3.5-4.5M3.8 11.5l2 2 3.5-4.5" stroke="#1d7ab8" stroke-width="1.6" fill="none"/>
<rect x="4.3" y="16" width="3.3" height="3.3" fill="none" stroke="#6fa6c9" stroke-width="0.8"/>
<path d="M11.5 7.2h2.5M11.5 12h2.5M11.5 17.5h2.5" stroke="#7a7f84" stroke-width="0.8"/>
<rect x="1.2" y="23.9" width="31.5" height="8.8" fill="#39465f"/>
<rect x="1.2" y="23.9" width="31.5" height="2" fill="#56647f"/>
<path d="M15.2 27.2h2.5v2.5h-2.5zM21 27.2h2.8v2.5H21zM26.8 27.2h2.9v2.5h-2.9z" fill="#b8c1cd"/>
</svg>
<div class="it" style="left:812px;top:508.60px;letter-spacing:0.457px">Troubleshooting</div>
<svg class="ic" style="left:768px;top:502px" viewBox="0 0 32 32">
<rect x="1.9" y="4.8" width="28.3" height="23.6" rx="0.8" fill="#f4f4f4" stroke="#6e757b" stroke-width="1"/>
<rect x="2.4" y="5.3" width="27.3" height="1.6" fill="#d0d3d6"/>
<path d="M26 6h0.8M27.5 6h0.8M29 6h0.6" stroke="#555" stroke-width="0.8"/>
<path d="M8 15l5-1v12l-5 1z" fill="#c8ccd0" stroke="#8e9398" stroke-width="0.4"/>
<path d="M16 9.3l14 0.9v14l-14-1.5z" fill="#c9d4f5"/>
<path d="M16 9.3l7.5 0.5 2 14-9.5-1z" fill="#0b2ac2"/>
<path d="M12 26l8-2.5 10 1.5v3l-18 0z" fill="#d4d8dc"/>
</svg>
<div class="it" style="left:1062px;top:508.60px;letter-spacing:0.167px">User Accounts</div>
<svg class="ic" style="left:1018px;top:502px" viewBox="0 0 32 32">
<path d="M1.8 25c0-5 3-8.3 7.5-8.3s7.5 3.3 7.5 8.3z" fill="#6db25a"/>
<path d="M7.5 17l2 6 2-6z" fill="#e8f0e2"/>
<circle cx="9.75" cy="10" r="5" fill="#efc8a0"/>
<path d="M4.5 10.5c-0.5-4.5 2-7 5.5-7s6 2 6 5.5c-1.5-1.5-3-2-5-2s-4 1-6.5 3.5z" fill="#d8c27a"/>
<path d="M14.3 30.2c0-6 3.5-10.5 8.8-10.5s8.7 4.5 8.7 10.5z" fill="#79a9d8"/>
<path d="M21 20l2 5 2-5z" fill="#e8eef5"/>
<circle cx="21.6" cy="13.5" r="5.5" fill="#a9703f"/>
<path d="M16 13c0-5 3-7.5 6-7.5s5.5 2.5 5.5 6.5c-1.5-2-3-2.5-5.5-2.5s-4 1-6 3.5z" fill="#34302c"/>
</svg>
<div class="it" style="left:62px;top:558.60px;letter-spacing:0.367px">Windows Defender</div>
<svg class="ic" style="left:18px;top:552px" viewBox="0 0 32 32">
<path d="M1.11 4.56L8.93 5.23L8.94 10.72L1.30 9.80z" fill="#c9ccd0" stroke="#3e4347" stroke-width="0.7"/>
<path d="M11.24 5.43L19.35 6.12L19.13 11.94L11.21 10.99z" fill="#c9ccd0" stroke="#3e4347" stroke-width="0.7"/>
<path d="M21.95 6.35L30.06 7.04L29.60 13.20L21.68 12.25z" fill="#c9ccd0" stroke="#3e4347" stroke-width="0.7"/>
<path d="M1.30 9.80L10.64 10.92L10.62 14.57L1.43 13.25z" fill="#c6c9cd" stroke="#3e4347" stroke-width="0.7"/>
<path d="M10.64 10.92L19.98 12.04L19.82 15.89L10.62 14.57z" fill="#b9bdb5" stroke="#3e4347" stroke-width="0.7"/>
<path d="M19.98 12.04L29.60 13.20L29.30 17.25L19.82 15.89z" fill="#d2d5d8" stroke="#3e4347" stroke-width="0.7"/>
<path d="M1.43 13.25L6.16 13.93L6.22 17.48L1.55 16.70z" fill="#aeb3b0" stroke="#3e4347" stroke-width="0.7"/>
<path d="M6.16 13.93L15.36 15.25L15.27 19.00L6.22 17.48z" fill="#c2c5c9" stroke="#3e4347" stroke-width="0.7"/>
<path d="M15.36 15.25L24.56 16.57L24.33 20.52L15.27 19.00z" fill="#c6c9cd" stroke="#3e4347" stroke-width="0.7"/>
<path d="M24.56 16.57L29.30 17.25L29.00 21.30L24.33 20.52z" fill="#b9bdb5" stroke="#3e4347" stroke-width="0.7"/>
<path d="M1.55 16.70L10.61 18.22L10.59 21.87L1.68 20.15z" fill="#d2d5d8" stroke="#3e4347" stroke-width="0.7"/>
<path d="M10.61 18.22L19.67 19.74L19.51 23.58L10.59 21.87z" fill="#aeb3b0" stroke="#3e4347" stroke-width="0.7"/>
<path d="M19.67 19.74L29.00 21.30L28.70 25.35L19.51 23.58z" fill="#c2c5c9" stroke="#3e4347" stroke-width="0.7"/>
<path d="M1.68 20.15L6.27 21.03L6.32 24.59L1.80 23.60z" fill="#c6c9cd" stroke="#3e4347" stroke-width="0.7"/>
<path d="M6.27 21.03L15.19 22.75L15.10 26.50L6.32 24.59z" fill="#b9bdb5" stroke="#3e4347" stroke-width="0.7"/>
<path d="M15.19 22.75L24.11 24.47L23.88 28.41L15.10 26.50z" fill="#d2d5d8" stroke="#3e4347" stroke-width="0.7"/>
<path d="M24.11 24.47L28.70 25.35L28.40 29.40L23.88 28.41z" fill="#aeb3b0" stroke="#3e4347" stroke-width="0.7"/>
</svg>
<div class="it" style="left:312px;top:558.60px;letter-spacing:0.427px">Windows Firewall</div>
<svg class="ic" style="left:268px;top:552px" viewBox="0 0 32 32">
<defs><radialGradient id="fg" cx="0.4" cy="0.35" r="0.7"><stop offset="0" stop-color="#8fe6ff"/><stop offset="0.5" stop-color="#2f86dc"/><stop offset="1" stop-color="#1a3fa6"/></radialGradient></defs>
<circle cx="22.7" cy="11.5" r="9.3" fill="url(#fg)"/>
<path d="M14 10c1.5-5 5-8 9-8 1 2-2 3-4 5s-3 5-5 3z" fill="#3dbb3f"/>
<path d="M29.5 8c2 2.5 2.5 5 1.8 8-1.5-2-2.3-5-1.8-8z" fill="#3dbb3f"/>
<path d="M1.9 9.7l23.1 2.3v19l-22.7-4.7z" fill="#a4522f"/>
<path d="M25 12l1.8-1v18.8L25 31z" fill="#6e2e18"/>
<g stroke="#6a2a16" stroke-width="0.6" fill="none">
<path d="M2 13l23 2.2M2.1 16.3l23 2.2M2.1 19.6l23 2.4M2.2 22.9l23 2.6M2.3 26.3l22.8 2.5"/>
<path d="M8 10.3v3.3M14 10.9v3.3M20 11.5v3.3M5 13.3v3.3M11 13.9v3.3M17 14.5v3.3M23 15v3.3M8 16.6v3.3M14 17.2v3.3M20 17.8v3.3M5 19.9v3.3M11 20.5v3.3M17 21.1v3.3M23 21.7v3.3M8 23.3v3.3M14 23.9v3.3M20 24.6v3.3"/>
</g>
</svg>
<div class="it" style="left:562px;top:558.60px;letter-spacing:0.200px">Work Folders</div>
<svg class="ic" style="left:518px;top:552px" viewBox="0 0 32 32">
<path d="M6.2 3h15.8v26.3H6.2z" fill="#f0c95e"/>
<path d="M6.2 3l5.8 4v23l-5.8-1z" fill="#f9e196"/>
<path d="M12.9 14.5l10.5-4.1 7.6 2.3-10.8 4.3z" fill="#5ab5ee"/>
<path d="M12.9 14.5l7.3 2.5v14.6l-7.2-2.3z" fill="#1f93e0"/>
<path d="M20.2 17l10.8-4.3v15.9l-10.8 3z" fill="#1572c0"/>
<g stroke="#72cdfb" stroke-width="0.6" fill="none">
<path d="M12.9 18.5l7.3 2.5M12.9 22.3l7.3 2.5M12.9 26l7.3 2.5M15.3 15.3v14.6M17.7 16.1v14.7"/>
</g>
<g stroke="#0e5ea6" stroke-width="0.6" fill="none">
<path d="M20.2 21l10.8-4.2M20.2 24.8l10.8-4.1M20.2 28.4l10.8-3.9M23.8 15.6v15M27.4 14.2v15.2"/>
</g>
</svg>

<!-- dialog -->
<div class="a" style="left:59px;top:52px;width:363px;height:450px;background:#f0f0f0;border:1px solid #3a72a6;box-shadow:0 6px 20px 3px rgba(0,0,0,0.18)"></div>
<div class="a" style="left:60px;top:53px;width:361px;height:30px;background:#fff"></div>
<svg class="a" style="left:67px;top:58px" width="17" height="17" viewBox="0 0 32 32">
<path d="M6.3 5.8l12.4-0.8 5 1.2v19.5l-7 3.3-10.4-1.8z" fill="#f4f4f4"/>
<path d="M6.3 5.8l10.4 0.9v22.3l-10.4-1.8z" fill="#f6f6f6" stroke="#b5b9bd" stroke-width="0.6"/>
<path d="M8 8l7.5 0.6v18.4l-7.5-1.3z" fill="#ebebeb"/>
<path d="M16.7 6.7l7-0.5v19.5l-7 3.3z" fill="#d4d7da" stroke="#9ea3a8" stroke-width="0.5"/>
<path d="M18.5 7v20M20.5 6.8v19.5M22.3 6.6v18.8" stroke="#f2f2f2" stroke-width="0.6"/>
<path d="M6.3 5.8l12.4-0.8 5 1.2-7 0.5z" fill="#c6c9cc"/>
<circle cx="11" cy="10.3" r="1" fill="none" stroke="#333" stroke-width="0.8"/>
<path d="M6.2 27.3l10.5 1.7 7-3.3" stroke="#222" stroke-width="1.6" fill="none"/>
<g fill="none" stroke="#c92a3a" stroke-width="1.7" stroke-linecap="round">
<path d="M17.7 3A22.3 22.3 0 0 1 32.7 3"/>
<path d="M19.7 6A16.5 16.5 0 0 1 31 6"/>
<path d="M21.3 9A9.3 9.3 0 0 1 29.7 9"/>
<path d="M22.7 12.3A4 4 0 0 1 28 12.3"/>
</g>
<path d="M24 15l1.6 0.3" stroke="#c92a3a" stroke-width="1.5"/>
</svg>
<div class="t" style="left:89px;top:61.5px;font-size:12px;color:#000">Infrared</div>
<svg class="a" style="left:400px;top:61px" width="12" height="12"><path d="M0.5 0.5L11.5 11.5M11.5 0.5L0.5 11.5" stroke="#000" stroke-width="1.1"/></svg>

<!-- tabs -->
<div class="a" style="left:66px;top:110px;width:347px;height:354px;background:#fff;border:1px solid #d9d9d9"></div>
<div class="a" style="left:117px;top:92px;width:82px;height:19px;background:#f0f0f0;border:1px solid #d9d9d9;border-bottom:none"></div>
<div class="a" style="left:198px;top:92px;width:57px;height:19px;background:#f0f0f0;border:1px solid #d9d9d9;border-bottom:none"></div>
<div class="a" style="left:66px;top:90px;width:52px;height:22px;background:#fff;border:1px solid #d9d9d9;border-bottom:none"></div>
<div class="dt" style="left:74px;top:95px">Infrared</div>
<div class="dt" style="left:122px;top:97px">Image Transfer</div>
<div class="dt" style="left:205px;top:97px">Hardware</div>

<!-- checkboxes -->
<div class="cb" style="left:91px;top:136px"><svg width="11" height="11"><path d="M1.1 5.4L3.9 8.3L9.8 2.2" fill="none" stroke="#333" stroke-width="1.3"/></svg></div><div class="dt" style="left:107px;top:136.53px">Display an icon on the taskbar indicating infrared activity</div><div class="cb" style="left:91px;top:162px"><svg width="11" height="11"><path d="M1.1 5.4L3.9 8.3L9.8 2.2" fill="none" stroke="#333" stroke-width="1.3"/></svg></div><div class="dt" style="left:107px;top:163.23px">Play a sound when an infrared device is nearby</div><div class="cb" style="left:91px;top:209px"><svg width="11" height="11"><path d="M1.1 5.4L3.9 8.3L9.8 2.2" fill="none" stroke="#333" stroke-width="1.3"/></svg></div><div class="dt" style="left:107px;top:210.13px">Allow others to send files to my computer using infrared</div><div class="dt" style="left:107px;top:223.03px">communications</div><div class="cb" style="left:91px;top:240px"><svg width="11" height="11"><path d="M1.1 5.4L3.9 8.3L9.8 2.2" fill="none" stroke="#333" stroke-width="1.3"/></svg></div><div class="dt" style="left:107px;top:241.03px">Notify me when I receive files</div>

<!-- group -->
<div class="a" style="left:81px;top:190px;width:320px;height:190px;border:1px solid #dcdcdc"></div>
<div class="dt" style="left:88px;top:185.7px;padding:0 2px;background:#fff">File transfer options</div>
<div class="dt" style="left:90px;top:278.3px">Save received files here:</div>
<div class="a" style="left:91px;top:301px;width:299px;height:20px;border:1px solid #7a7a7a;background:#fff"></div>
<div class="dt" style="left:93px;top:306px;letter-spacing:0.33px">C:\Users\TCB\Desktop</div>
<div class="btn" style="left:311px;top:337px;width:73px">Browse...</div>

<div class="dt" style="left:81px;top:431px;color:#0066cc;text-decoration:underline">Send or receive a file using an infrared connection</div>

<div class="btn" style="left:179px;top:472px;width:73px;border:2px solid #0078d7;line-height:17px">OK</div>
<div class="btn" style="left:260px;top:472px;width:73px">Cancel</div>
<div class="btn" style="left:341px;top:472px;width:73px;background:#cccccc;border-color:#bfbfbf;color:#838383">Apply</div>

<!-- taskbar -->
<div class="a" style="left:0;top:1040px;width:1920px;height:40px;background:#04050b"></div>
<div class="a" style="left:48px;top:1040px;width:344px;height:40px;background:#333333"></div>
<svg class="a" style="left:16px;top:1052px" width="17" height="17" viewBox="0 0 17 17"><path d="M0 2.2L6.6 1.2V7.6H0z M7.6 1.1L16.2 0V7.6H7.6z M0 8.6H6.6V15L0 14z M7.6 8.6H16.2V16.2L7.6 15.1z" fill="#fff"/></svg>
<div class="t" style="left:60px;top:1053.3px;font-size:15px;color:#c2c2c2">Search the web and Windows</div>
<svg class="a" style="left:405px;top:1053px" width="22" height="14" viewBox="0 0 22 14"><rect x="5.5" y="0.5" width="11" height="13" fill="none" stroke="#fff" stroke-width="1"/><path d="M3.5 2.5H1.5V11.5H3.5M18.5 2.5H20.5V11.5H18.5" fill="none" stroke="#fff" stroke-width="1"/></svg>
<svg class="a" style="left:455px;top:1049px" width="22" height="22" viewBox="0 0 22 22"><path d="M2.2 13.5C2.2 18.5 6.5 21.5 12.5 21.5C15.5 21.5 18 20.7 20.2 19.3V15.3C18.2 16.8 15.8 17.7 13.3 17.7C10 17.7 7.6 15.8 7.4 13.3H21.2C21.4 12.5 21.5 11.6 21.5 10.8C21.5 5 17.5 1 11.8 1C6.5 1 2 4.5 0.8 9.8C2.5 6.8 5.5 5.2 8.8 5.4C5.5 6.8 2.2 9.5 2.2 13.5Z" fill="#1a7ae0"/><path d="M7.6 10.2C8.1 8.2 9.8 6.8 12 6.8C14.3 6.8 15.9 8.2 16.1 10.2Z" fill="#04050b"/></svg>
<svg class="a" style="left:503px;top:1051px" width="24" height="19" viewBox="0 0 24 19"><path d="M0.5 1h8l2 2h13v15.5H0.5z" fill="#f3d26d"/><path d="M0.5 4h23v14.5H0.5z" fill="#f7dc85"/><path d="M6 18.5v-7h12v7h-3.5v-3.5h-5v3.5z" fill="#23a9e6"/><rect x="6" y="11.5" width="12" height="1.5" fill="#1a8fd0"/></svg>
<svg class="a" style="left:552px;top:1048px" width="23" height="24" viewBox="0 0 23 24"><path d="M0.9 6.9L22 4.6V23.3L0.9 21z" fill="#fff"/><path d="M5.5 6.5C5.5 2 7 0.5 9 0.5S12.5 2 12.8 5.8M8 6.2C8 2.5 9.5 1 11.5 1S14.5 2.5 14.8 5.5" fill="none" stroke="#fff" stroke-width="1.1"/><path d="M4 9.7l4.7-0.5v4.4H4zM9.5 9.1l5.5-0.6v5.1H9.5zM4 14.4h4.7v3.5L4 17.5zM9.5 14.4H15v4.3l-5.5-0.6z" fill="#04050b"/></svg>
<svg class="a" style="left:602px;top:1052px" width="22" height="16" viewBox="0 0 16 13"><rect x="0.5" y="0.5" width="15" height="12" fill="#5ebcf0" stroke="#1b5ea8"/><circle cx="5" cy="5" r="2.5" fill="#1b5ea8"/><path d="M5 2.5a2.5 2.5 0 0 1 2.5 2.5H5z" fill="#f5b335"/><rect x="9" y="3" width="4" height="2" fill="#fff"/><rect x="9" y="6" width="4" height="1" fill="#fff"/><rect x="2" y="9" width="4" height="1.2" fill="#d8b05a"/><rect x="6" y="9" width="2" height="1.2" fill="#fff"/><rect x="9" y="9" width="5" height="1.2" fill="#1b5ea8"/></svg>
<div class="a" style="left:593px;top:1078px;width:40px;height:2px;background:#76b9ed"></div>
<div class="a" style="left:638px;top:1040px;width:48px;height:40px;background:#393939"></div>
<div class="a" style="left:638px;top:1078px;width:48px;height:2px;background:#76b9ed"></div>
<svg class="a" style="left:650px;top:1047px" width="24" height="24" viewBox="0 0 32 32">
<path d="M6.3 5.8l12.4-0.8 5 1.2v19.5l-7 3.3-10.4-1.8z" fill="#f4f4f4"/>
<path d="M6.3 5.8l10.4 0.9v22.3l-10.4-1.8z" fill="#f6f6f6" stroke="#b5b9bd" stroke-width="0.6"/>
<path d="M8 8l7.5 0.6v18.4l-7.5-1.3z" fill="#ebebeb"/>
<path d="M16.7 6.7l7-0.5v19.5l-7 3.3z" fill="#d4d7da" stroke="#9ea3a8" stroke-width="0.5"/>
<path d="M18.5 7v20M20.5 6.8v19.5M22.3 6.6v18.8" stroke="#f2f2f2" stroke-width="0.6"/>
<path d="M6.3 5.8l12.4-0.8 5 1.2-7 0.5z" fill="#c6c9cc"/>
<circle cx="11" cy="10.3" r="1" fill="none" stroke="#333" stroke-width="0.8"/>
<path d="M6.2 27.3l10.5 1.7 7-3.3" stroke="#222" stroke-width="1.6" fill="none"/>
<g fill="none" stroke="#c92a3a" stroke-width="1.7" stroke-linecap="round">
<path d="M17.7 3A22.3 22.3 0 0 1 32.7 3"/>
<path d="M19.7 6A16.5 16.5 0 0 1 31 6"/>
<path d="M21.3 9A9.3 9.3 0 0 1 29.7 9"/>
<path d="M22.7 12.3A4 4 0 0 1 28 12.3"/>
</g>
<path d="M24 15l1.6 0.3" stroke="#c92a3a" stroke-width="1.5"/>
</svg>

<!-- watermark -->
<svg class="a" style="left:1668px;top:1040px" width="56" height="40" viewBox="0 0 56 40"><path d="M16.9 0H51.9L50.6 6.6Q52.8 8 51.5 13L31.1 37.6L4.2 29.4Q1 28 2.2 22L5.4 15.6Z" fill="#9a9a9a"/><path d="M6.3 20.4L30.7 24.5L51.9 0H56V6.6L49.8 8.8L31.1 32.7L7.5 27Q5 26 5.3 23Z" fill="#04050b"/><path d="M51 6.8Q53 7.5 52.5 10L51 13" stroke="#9a9a9a" stroke-width="2.6" fill="none" stroke-linecap="round"/><path d="M23.5 2.2L39.8 5.2" stroke="#04050b" stroke-width="3.3" stroke-linecap="round"/></svg>
<div class="t" style="left:1732px;top:1045.8px;font-size:18px;color:#7a7a7a">The Collection Book</div>

<!-- tray -->
<svg class="a" style="left:1754px;top:1055px" width="14" height="9"><path d="M1 7.5l6-6 6 6" fill="none" stroke="#fff" stroke-width="1.1"/></svg>
<svg class="a" style="left:1776px;top:1053px" width="18" height="15" viewBox="0 0 18 15"><rect x="3.5" y="2.5" width="13" height="9" fill="none" stroke="#fff" stroke-width="1"/><path d="M10 11.5v2.5M6 14.5h8" stroke="#fff"/><rect x="0.5" y="0.5" width="4" height="4" fill="#04050b" stroke="#fff" stroke-width="0.9"/></svg>
<svg class="a" style="left:1800px;top:1052px" width="18" height="16" viewBox="0 0 18 16"><path d="M1 5h3l4-4v14l-4-4H1z" fill="none" stroke="#fff" stroke-width="1"/><path d="M10.5 5a4 4 0 0 1 0 6M12.5 3a7 7 0 0 1 0 10M14.5 1a10 10 0 0 1 0 14" fill="none" stroke="#fff" stroke-width="1"/></svg>
<svg class="a" style="left:1825px;top:1052px" width="17" height="17" viewBox="0 0 17 17"><path d="M0.5 0.5h16v11h-6l-2 3-2-3h-6z" fill="none" stroke="#fff" stroke-width="1"/><path d="M3 4h10M3 6.5h10M3 9h6" stroke="#fff" stroke-width="0.9"/></svg>
<div class="t" style="left:1858px;top:1044.8px;font-size:12px;color:#fff">9:15 AM</div>
<div class="t" style="left:1857px;top:1061.8px;font-size:12px;color:#fff">2/3/2016</div>
<div class="a" style="left:1915px;top:1040px;width:1px;height:40px;background:#555"></div>

</body></html>
